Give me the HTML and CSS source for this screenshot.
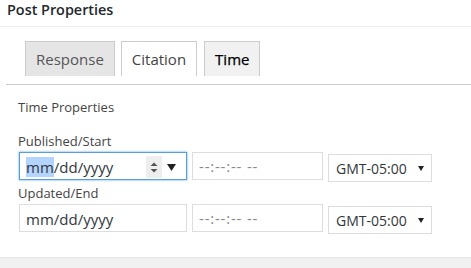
FILE: index.html
```html
<!DOCTYPE html>
<html lang="en">
<head>
<meta charset="utf-8">
<title>Post Properties</title>
<link rel="stylesheet" href="styles.css">
</head>
<body>
<div class="postbox">
  <h2 class="hndle">Post Properties</h2>
  <div class="inside">
    <nav class="tabs">
      <span class="tab">Response</span>
      <span class="tab tab-hover">Citation</span>
      <span class="tab tab-active">Time</span>
    </nav>
    <div class="pane">
      <p class="section-title">Time Properties</p>
      <div class="field">
        <label class="field-label">Published/Start</label>
        <div class="row">
          <div class="input date focused">
            <span class="seg selected">mm</span><span class="date-rest">/dd/yyyy</span>
            <span class="spacer"></span>
            <span class="spin">
              <svg width="16" height="22" viewBox="0 0 16 22"><polygon points="4.5,10 11.5,10 8,6.5" fill="#555"/><polygon points="4.5,13 11.5,13 8,16.5" fill="#555"/></svg>
            </span>
            <svg class="drop" width="9" height="7" viewBox="0 0 9 7"><polygon points="0,0 9,0 4.5,7" fill="#222"/></svg>
          </div>
          <div class="input time">--:--:-- --</div>
          <div class="select">GMT-05:00<span class="spacer"></span><svg class="caret" width="6" height="5" viewBox="0 0 6 5"><polygon points="0,0 6,0 3,5" fill="#222"/></svg></div>
        </div>
      </div>
      <div class="field">
        <label class="field-label">Updated/End</label>
        <div class="row">
          <div class="input date">
            <span class="seg">mm</span><span class="date-rest">/dd/yyyy</span>
          </div>
          <div class="input time">--:--:-- --</div>
          <div class="select">GMT-05:00<span class="spacer"></span><svg class="caret" width="6" height="5" viewBox="0 0 6 5"><polygon points="0,0 6,0 3,5" fill="#222"/></svg></div>
        </div>
      </div>
    </div>
  </div>
</div>
</body>
</html>
```
FILE: styles.css
```css
html, body {
  margin: 0;
  padding: 0;
}
body {
  background: #f1f1f1;
  font-family: "Open Sans", "Noto Sans", sans-serif;
  color: #444;
  min-height: 268px;
}
.postbox {
  background: #fff;
  border-bottom: 1px solid #e5e5e5;
}
.hndle {
  margin: 0;
  padding: 0 7px;
  height: 26px;
  line-height: 19px;
  font-size: 14.4px;
  font-weight: 600;
  color: #23282d;
  border-bottom: 1px solid #eee;
}
.inside {
  margin-left: 6px;
}
.tabs {
  display: flex;
  gap: 6px;
  margin-top: 14px;
  padding-left: 19px;
  padding-bottom: 8px;
  border-bottom: 1px solid #ccc;
}
.tab {
  display: block;
  height: 34px;
  line-height: 34px;
  padding: 0 10px;
  font-size: 15px;
  border: 1px solid #ccc;
  border-bottom: none;
  background: #e5e5e5;
  color: #555;
}
.tab-hover {
  background: #fff;
  color: #444;
}
.tab-active {
  background: #f1f1f1;
  color: #000;
  margin-left: 1px;
  -webkit-text-stroke: 0.25px #000;
}
.pane {
  padding: 0 0 23px 12px;
}
.section-title {
  margin: 13px 0 0;
  font-size: 13px;
  line-height: 18px;
}
.field-label {
  display: block;
  font-size: 13px;
  line-height: 18px;
}
.section-title + .field {
  margin-top: 16px;
}
.field + .field {
  margin-top: 2px;
}
.row {
  display: flex;
  align-items: flex-start;
  margin-top: 2px;
  margin-left: 1px;
}
.input, .select {
  box-sizing: border-box;
  height: 28px;
  border: 1px solid #ddd;
  display: flex;
  align-items: center;
  color: #32373c;
}
.date {
  width: 168px;
  padding: 1px 10px 0 6px;
  font-size: 15px;
}
.date.focused {
  border-color: #5b9dd9;
  box-shadow: 0 0 2px rgba(30, 140, 190, 0.8);
}
.seg {
  display: inline-block;
  line-height: 20px;
}
.seg.selected {
  background: #b3d4fc;
}
.spacer {
  flex: 1;
}
.spin {
  display: flex;
  width: 16px;
  height: 22px;
  background: #eee;
  margin-right: 5px;
}
.drop {
  display: block;
  margin-top: 1px;
}
.time {
  width: 131px;
  margin-left: 5px;
  padding: 0 6px;
  font-size: 15px;
  letter-spacing: 0.8px;
  color: #888;
}
.select {
  width: 104px;
  margin-left: 5px;
  margin-top: 2px;
  padding: 0 7px 0 7px;
  font-size: 14px;
  color: #32373c;
}
.caret {
  display: block;
}
```
